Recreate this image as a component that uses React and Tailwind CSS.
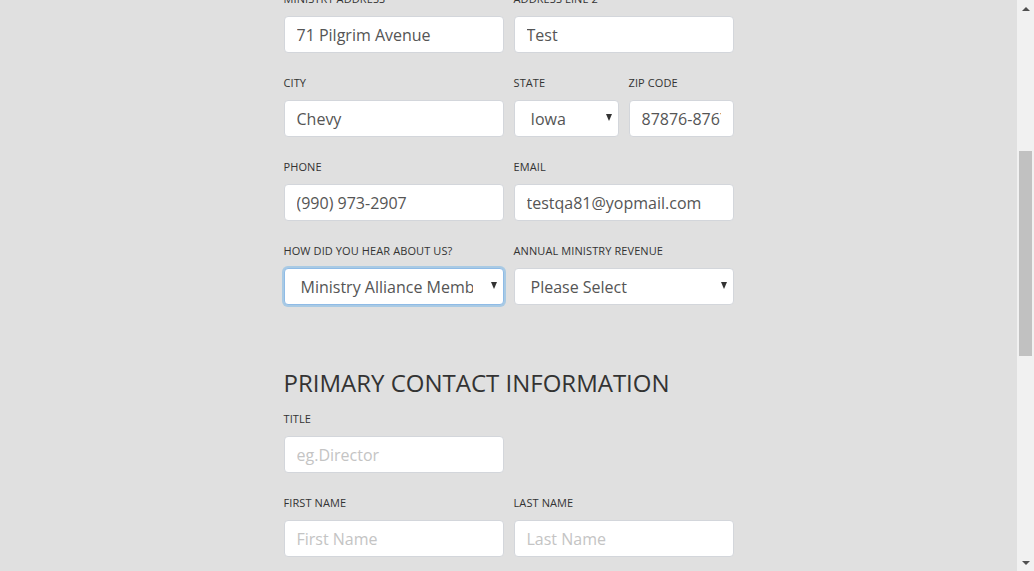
import { useState } from 'react';

const font = { fontFamily: '"Open Sans", "Liberation Sans", sans-serif' };

const Label = ({ children }) => (
  <label className="block h-[16px] mb-[9px] text-[11px] leading-[16px] uppercase tracking-[0.1px] text-[#333]">{children}</label>
);

const TextInput = ({ value, placeholder }) => {
  const [val, setVal] = useState(value || '');
  return (
    <input
      value={val}
      placeholder={placeholder}
      onChange={(e) => setVal(e.target.value)}
      className="block w-full h-[37px] px-[12px] bg-white border border-[#d3d6db] rounded-[4px] text-[16px] text-[#555] placeholder:text-[#c4c4c4] outline-none"
      style={font}
    />
  );
};

const Select = ({ value, options, focused }) => (
  <div className="relative">
    <select
      defaultValue={value}
      className={
        'block w-full h-[37px] pl-[16px] pr-[30px] bg-white rounded-[4px] text-[16px] text-[#555] appearance-none outline-none ' +
        (focused
          ? 'border border-[#8fbbe6] shadow-[0_0_0_2px_rgba(102,175,233,0.45)]'
          : 'border border-[#d3d6db]')
      }
      style={font}
    >
      {options.map((o) => (
        <option key={o}>{o}</option>
      ))}
    </select>
    <span className="absolute right-[7px] top-[14px] w-0 h-0 border-l-[3.5px] border-r-[3.5px] border-t-[7px] border-l-transparent border-r-transparent border-t-[#333] pointer-events-none" />
  </div>
);

const Field = ({ label, children }) => (
  <div>
    <Label>{label}</Label>
    {children}
  </div>
);

const Scrollbar = () => (
  <div className="w-[17px] h-full bg-[#f1f1f1] flex flex-col items-center shrink-0">
    <div className="h-[17px] flex items-center justify-center">
      <span className="w-0 h-0 border-l-[4px] border-r-[4px] border-b-[4px] border-l-transparent border-r-transparent border-b-[#505050]" />
    </div>
    <div className="flex-1 w-full px-[2px]">
      <div className="mt-[134px] h-[205px] bg-[#c1c1c1]" />
    </div>
    <div className="h-[17px] flex items-center justify-center">
      <span className="w-0 h-0 border-l-[4px] border-r-[4px] border-t-[4px] border-l-transparent border-r-transparent border-t-[#505050]" />
    </div>
  </div>
);

export default function App() {
  return (
    <div className="flex w-[1034px] h-[571px] overflow-hidden bg-[#e0e0e0]" style={font}>
      <main className="flex-1 overflow-hidden">
        <div className="w-[450px] mx-auto mt-[-9px]">
          <div className="grid grid-cols-2 gap-x-[10px] gap-y-[22px]">
            <Field label="Ministry Address">
              <TextInput value="71 Pilgrim Avenue" />
            </Field>
            <Field label="Address Line 2">
              <TextInput value="Test" />
            </Field>
            <Field label="City">
              <TextInput value="Chevy" />
            </Field>
            <div className="grid grid-cols-2 gap-x-[10px]">
              <Field label="State">
                <Select value="Iowa" options={['Iowa', 'Idaho', 'Illinois']} />
              </Field>
              <Field label="Zip Code">
                <TextInput value="87876-8767" />
              </Field>
            </div>
            <Field label="Phone">
              <TextInput value="(990) 973-2907" />
            </Field>
            <Field label="Email">
              <TextInput value="testqa81@yopmail.com" />
            </Field>
            <Field label="How did you hear about us?">
              <Select focused value="Ministry Alliance Member" options={['Ministry Alliance Member', 'Search Engine', 'Other']} />
            </Field>
            <Field label="Annual Ministry Revenue">
              <Select value="Please Select" options={['Please Select', 'Under $100,000', 'Over $100,000']} />
            </Field>
          </div>

          <h2 className="mt-[61px] mb-[11px] h-[34px] text-[24px] leading-[34px] uppercase text-[#333]">
            Primary Contact Information
          </h2>

          <div className="grid grid-cols-2 gap-x-[10px] gap-y-[22px]">
            <Field label="Title">
              <TextInput placeholder="eg.Director" />
            </Field>
            <div />
            <Field label="First Name">
              <TextInput placeholder="First Name" />
            </Field>
            <Field label="Last Name">
              <TextInput placeholder="Last Name" />
            </Field>
          </div>
        </div>
      </main>
      <Scrollbar />
    </div>
  );
}
